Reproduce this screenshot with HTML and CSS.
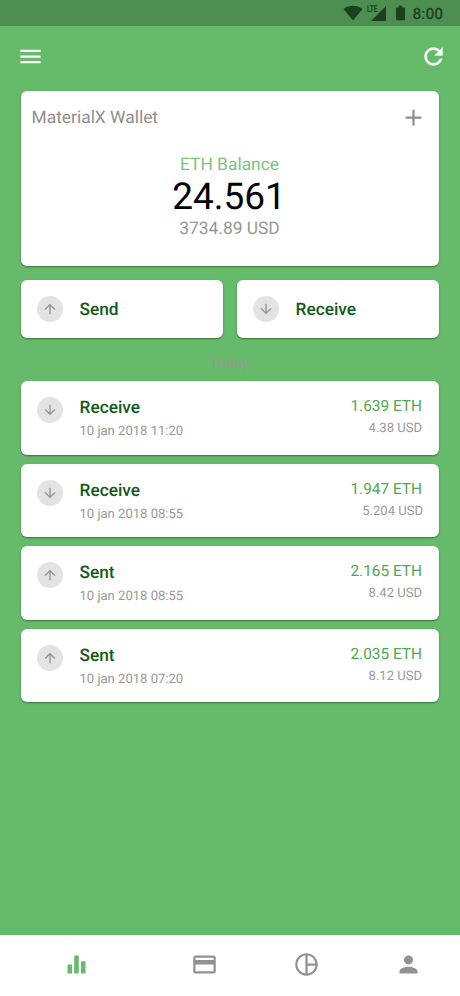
FILE: index.html
```html
<!DOCTYPE html>
<html lang="en">
<head>
<meta charset="utf-8">
<title>MaterialX Wallet</title>
<link rel="stylesheet" href="styles.css">
</head>
<body>
<svg class="defs" aria-hidden="true">
  <symbol id="up" viewBox="0 0 24 24"><path d="M4 12l1.41 1.41L11 7.83V20h2V7.83l5.58 5.59L20 12l-8-8-8 8z"/></symbol>
  <symbol id="down" viewBox="0 0 24 24"><path d="M20 12l-1.41-1.41L13 16.17V4h-2v12.17l-5.58-5.59L4 12l8 8 8-8z"/></symbol>
</svg>
<div class="screen">
  <div class="status">
    <svg class="wifi" viewBox="0 0 20 16"><path d="M10 15.5L.5 4C3.5 1.700 6.500.8 10 .8S16.500 1.700 19.500 4z"/></svg>
    <span class="lte">LTE</span>
    <svg class="signal" viewBox="0 0 15 15"><path d="M15 0v15H0z"/></svg>
    <svg class="battery" viewBox="0 0 10 16"><path d="M3 0h4v2h2q1 0 1 1v12q0 1-1 1H1q-1 0-1-1V3q0-1 1-1h2z"/></svg>
    <span class="clock">8:00</span>
  </div>
  <header class="appbar">
    <svg class="icon" viewBox="0 0 24 24"><path d="M3 18h18v-2H3v2zm0-5h18v-2H3v2zm0-7v2h18V6H3z"/></svg>
    <svg class="icon" viewBox="0 0 24 24"><path stroke="currentColor" stroke-width=".3" d="M17.650 6.350C16.200 4.900 14.210 4 12 4c-4.420 0-7.990 3.580-7.990 8s3.570 8 7.990 8c3.730 0 6.840-2.550 7.730-6h-2.080c-.82 2.330-3.040 4-5.650 4-3.310 0-6-2.690-6-6s2.690-6 6-6c1.660 0 3.140.69 4.220 1.780L13 11h7V4l-2.350 2.350z"/></svg>
  </header>
  <main class="content">
    <section class="card balance">
      <div class="wallet">
        <span>MaterialX Wallet</span>
        <svg class="icon" viewBox="0 0 24 24"><path d="M19 13h-6v6h-2v-6H5v-2h6V5h2v6h6v2z"/></svg>
      </div>
      <div class="label">ETH Balance</div>
      <div class="total">24.561</div>
      <div class="fiat">3734.89 USD</div>
    </section>
    <div class="actions">
      <div class="card action"><span class="dot"><svg><use href="#up"/></svg></span><span class="name">Send</span></div>
      <div class="card action"><span class="dot"><svg><use href="#down"/></svg></span><span class="name">Receive</span></div>
    </div>
    <div class="day">Today</div>
    <div class="list">
      <div class="card item"><span class="dot"><svg><use href="#down"/></svg></span>
        <div class="info"><div class="name">Receive</div><div class="date">10 jan 2018 11:20</div></div>
        <div class="sum"><div class="eth">1.639 ETH</div><div class="usd">4.38 USD</div></div></div>
      <div class="card item"><span class="dot"><svg><use href="#down"/></svg></span>
        <div class="info"><div class="name">Receive</div><div class="date">10 jan 2018 08:55</div></div>
        <div class="sum"><div class="eth">1.947 ETH</div><div class="usd long">5.204 USD</div></div></div>
      <div class="card item"><span class="dot"><svg><use href="#up"/></svg></span>
        <div class="info"><div class="name">Sent</div><div class="date">10 jan 2018 08:55</div></div>
        <div class="sum"><div class="eth">2.165 ETH</div><div class="usd">8.42 USD</div></div></div>
      <div class="card item"><span class="dot"><svg><use href="#up"/></svg></span>
        <div class="info"><div class="name">Sent</div><div class="date">10 jan 2018 07:20</div></div>
        <div class="sum"><div class="eth">2.035 ETH</div><div class="usd">8.12 USD</div></div></div>
    </div>
  </main>
  <nav class="tabs">
    <svg class="icon active" viewBox="0 0 24 24"><path d="M4 12h4v8H4zm6-8h4v16h-4zm6 5h4v11h-4z"/></svg>
    <svg class="icon" viewBox="0 0 24 24"><path d="M20 4H4c-1.110 0-1.990.89-1.990 2L2 18c0 1.110.89 2 2 2h16c1.110 0 2-.89 2-2V6c0-1.110-.89-2-2-2zm0 14H4v-6h16v6zm0-10H4V6h16v2z"/></svg>
    <svg class="icon" viewBox="0 0 24 24"><path d="M12 2C6.480 2 2 6.480 2 12s4.480 10 10 10 10-4.480 10-10S17.520 2 12 2zm1 2.070c3.610.45 6.480 3.330 6.930 6.930H13V4.070zM4 12c0-4.060 3.070-7.440 7-7.930v15.870c-3.930-.5-7-3.880-7-7.940zm9 7.930V13h6.930c-.45 3.610-3.320 6.480-6.930 6.930z"/></svg>
    <svg class="icon" viewBox="0 0 24 24"><path d="M12 12c2.210 0 4-1.790 4-4s-1.790-4-4-4-4 1.790-4 4 1.790 4 4 4zm0 2c-2.670 0-8 1.340-8 4v2h16v-2c0-2.660-5.330-4-8-4z"/></svg>
  </nav>
</div>
</body>
</html>
```
FILE: styles.css
```css
* { box-sizing: border-box; }
body { margin: 0; background: #66bb6a; font-family: Roboto, sans-serif; text-rendering: geometricPrecision; }
svg { display: block; fill: currentColor; }
.defs { display: none; }
.screen { display: flex; flex-direction: column; width: 460px; height: 996px; background: #66bb6a; }

.status { display: flex; align-items: center; justify-content: flex-end; height: 26px; padding: 1px 17px 0 0; background: #4d8f50; color: #1c3f1e; }
.wifi { width: 20px; height: 16px; margin-top: -1px; }
.lte { margin: -8px -9px 0 4px; width: 13px; font: 700 9.500px/10px Roboto, sans-serif; letter-spacing: -0.2px; transform: scaleX(.7); transform-origin: left; }
.signal { width: 15px; height: 15px; margin-top: -1px; }
.battery { width: 9px; height: 16px; margin: -1px 7px 0 10px; }
.clock { font-size: 15.500px; font-weight: 500; line-height: 26px; }

.icon { width: 27px; height: 27px; flex: none; }
.appbar { display: flex; justify-content: space-between; align-items: center; height: 65px; padding: 0 13px 4px 17px; color: #fff; }
.content { flex: 1; padding: 0 21px; }
.card { background: #fff; border-radius: 6px; box-shadow: 0 1px 2px rgba(0, 0, 0, .4); }

.balance { height: 174.500px; text-align: center; }
.wallet { display: flex; justify-content: space-between; align-items: center; height: 52px; padding: 0 12px 0 10.500px; color: #8f8f8f; font-size: 17.400px; }
.wallet span { padding-top: 2px; }
.label { margin-top: 12px; margin-left: -1px; font-size: 17.400px; line-height: 20px; color: #7ac47d; }
.total { padding-top: 1px; margin-left: -2px; font-size: 37px; line-height: 43px; color: #000; }
.fiat { margin-left: -1px; font-size: 17.400px; line-height: 20px; color: #969696; }

.actions { display: grid; grid-template-columns: 1fr 1fr; gap: 14px; margin-top: 13.500px; }
.action { display: flex; align-items: center; height: 58px; padding-left: 16px; }
.dot { display: flex; align-items: center; justify-content: center; flex: none; width: 26px; height: 26px; margin-right: 16.500px; border-radius: 50%; background: #e3e3e3; color: #929292; }
.dot svg { width: 16px; height: 16px; }
.name { padding-top: 1px; font-size: 17.300px; line-height: 20px; font-weight: 500; color: #145a1b; }
.action .name { padding-top: 2px; }
.actions { margin-top: 14.500px; }

.day { margin-top: 15px; height: 20px; text-align: center; font-size: 15px; line-height: 20px; font-weight: 700; color: #85a487; }

.list { display: flex; flex-direction: column; gap: 9px; margin-top: 8px; }
.item { display: flex; height: 73.500px; padding: 16px 17px 0 16px; }
.info { flex: 1; }
.date { margin-top: 6px; font-size: 13.050px; line-height: 16px; color: #999; }
.sum { text-align: right; }
.eth { font-size: 15.400px; line-height: 18px; color: #4ea952; }
.usd { margin-top: 6px; font-size: 13.050px; line-height: 16px; color: #999; }
.usd.long { margin-right: -1px; }

.tabs { display: flex; align-items: center; height: 61px; padding: 0 37px 2px 63px; background: #fff; color: #919191; }
.tabs .icon + .icon { margin-left: 75px; }
.tabs .active + .icon { margin-left: 101px; }
.active { color: #66bb6a; }
```
